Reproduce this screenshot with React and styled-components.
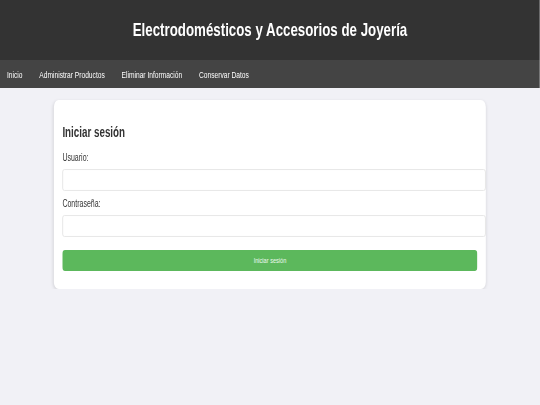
import styled, { createGlobalStyle } from "styled-components";

// the reference is squeezed horizontally, so the page is laid out wider and scaled back
const SQUEEZE = 0.7;

const GlobalStyle = createGlobalStyle`
  body {
    margin: 0;
    background: #f1f1f6;
    font-family: "Liberation Sans", Arial, Helvetica, sans-serif;
    overflow-x: hidden;
  }
`;

const Page = styled.div`
  width: ${540 / SQUEEZE}px;
  transform: scaleX(${SQUEEZE});
  transform-origin: 0 0;
`;

const Header = styled.header`
  background: #333333;
  color: #fff;
  height: 60px;
  display: flex;
  align-items: center;
  justify-content: center;
`;

const Title = styled.h1`
  margin: 0;
  font-size: 19px;
  font-weight: bold;
`;

const Nav = styled.nav`
  background: #444444;
  height: 28px;
  display: flex;
  align-items: center;
  padding: 0 10px;
  gap: 24px;
`;

const NavLink = styled.a`
  color: #fff;
  font-size: 9.5px;
  text-decoration: none;
`;

const Card = styled.main`
  width: 80%;
  box-sizing: border-box;
  margin: 12px auto 0;
  background: #fff;
  border-radius: 7px;
  box-shadow: 0 1px 4px rgba(0, 0, 0, 0.12);
  padding: 24px 12px 18px;
`;

const CardTitle = styled.h2`
  margin: 0 0 12px;
  font-size: 14px;
  line-height: 16px;
  font-weight: bold;
  color: #333;
`;

const Form = styled.form`
  display: flex;
  flex-direction: column;
`;

const Label = styled.label`
  font-size: 10px;
  line-height: 11px;
  color: #333;
  margin-bottom: 6px;
`;

const Input = styled.input`
  width: 100%;
  height: 20px;
  padding: 0 5px;
  border: 1px solid #e4e4e4;
  border-radius: 3px;
  margin-bottom: 7px;
  background: #fff;
  box-shadow: inset 0 0 1px rgba(0, 0, 0, 0.05);
`;

const Button = styled.button`
  margin-top: 6px;
  height: 21px;
  border: none;
  border-radius: 4px;
  background: #5cb85c;
  color: #eef8ee;
  font-family: inherit;
  font-size: 8px;
  cursor: pointer;
`;

export default function App() {
  return (
    <>
      <GlobalStyle />
      <Page>
        <Header>
          <Title>Electrodomésticos y Accesorios de Joyería</Title>
        </Header>
        <Nav>
          <NavLink href="#">Inicio</NavLink>
          <NavLink href="#">Administrar Productos</NavLink>
          <NavLink href="#">Eliminar Información</NavLink>
          <NavLink href="#">Conservar Datos</NavLink>
        </Nav>
        <Card>
          <CardTitle>Iniciar sesión</CardTitle>
          <Form onSubmit={(e) => e.preventDefault()}>
            <Label>Usuario:</Label>
            <Input type="text" />
            <Label>Contraseña:</Label>
            <Input type="password" />
            <Button type="submit">Iniciar sesión</Button>
          </Form>
        </Card>
      </Page>
    </>
  );
}
